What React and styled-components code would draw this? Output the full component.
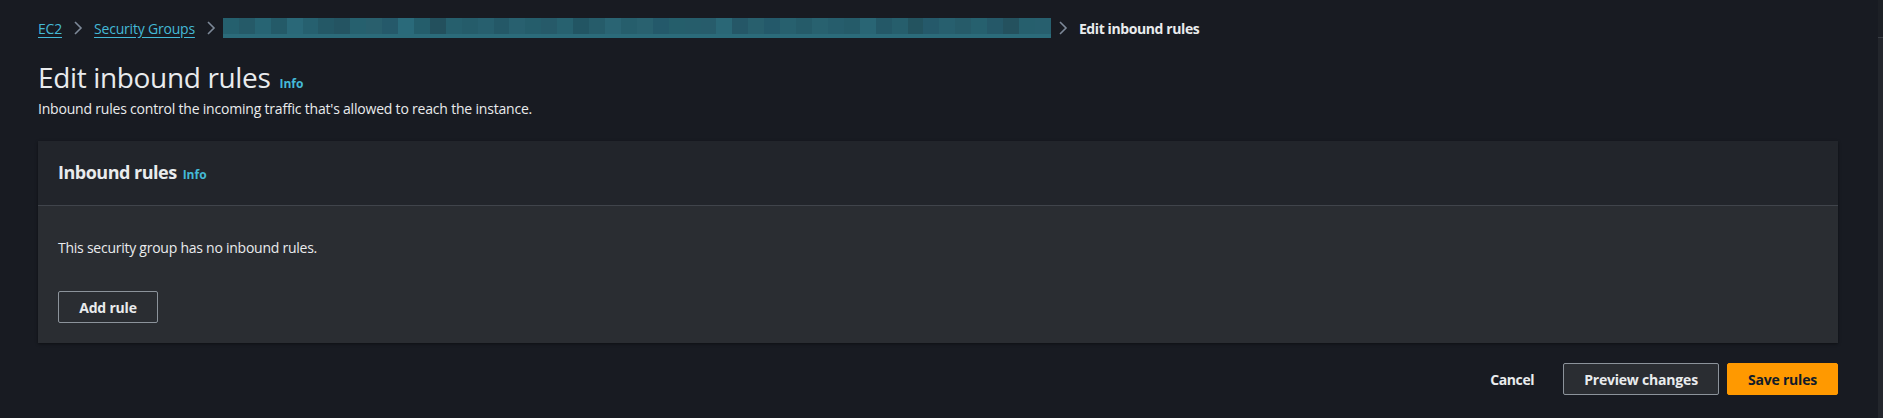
import React from 'react';
import styled, { createGlobalStyle } from 'styled-components';

const GlobalStyle = createGlobalStyle`
  html, body {
    margin: 0;
    padding: 0;
    background: #181b22;
  }
  body {
    font-family: "Open Sans", "Noto Sans", Arial, sans-serif;
    color: #e9ebed;
    -webkit-font-smoothing: antialiased;
  }
`;

const Shell = styled.div`
  display: flex;
  width: 1883px;
  min-height: 418px;
  background: #181b22;
`;

const Main = styled.main`
  flex: 1;
  padding: 0 40px 0 38px;
`;

const ScrollStrip = styled.div`
  width: 5px;
  background: #23262c;
  border-top: 37px solid #1d2026;
  box-shadow: inset 0 1px 0 #3a3e45;
`;

const Breadcrumbs = styled.nav`
  display: flex;
  align-items: center;
  height: 20px;
  margin-top: 18px;
  font-size: 14px;
  letter-spacing: -0.2px;
`;

const Crumb = styled.a`
  color: #44b9d6;
  text-decoration: underline;
  text-underline-offset: 3px;
  cursor: pointer;
`;

const CurrentCrumb = styled.span`
  color: #e9ebed;
  font-weight: 700;
  letter-spacing: -0.4px;
`;

const Chevron = styled.svg`
  width: 16px;
  height: 16px;
  margin: 0 8px;
  flex: none;
`;

/* blurred-out link text: the blur spills a few px past the text box */
const Redacted = styled.div`
  display: flex;
  flex-direction: column;
  width: 828px;
  height: 20px;
  margin: 0 -4px;
`;

const RedactedBlocks = styled.div`
  display: flex;
  flex: 1;
`;

const RedactedBlock = styled.div`
  flex: 1;
  background: ${p => p.$color};
`;

const RedactedLine = styled.div`
  height: 4px;
  background: #2b6b7a;
`;

const TitleRow = styled.div`
  display: flex;
  align-items: baseline;
  margin-top: 21px;
`;

const Title = styled.h1`
  margin: 0;
  font-size: 28px;
  line-height: 36px;
  font-weight: 400;
  letter-spacing: -0.35px;
  color: #e9ebed;
`;

const InfoLink = styled.a`
  margin-left: ${p => p.$gap || 6}px;
  font-size: 12px;
  font-weight: 700;
  color: #44b9d6;
  cursor: pointer;
`;

const Description = styled.p`
  margin: 4px 0 0;
  font-size: 14px;
  line-height: 20px;
  letter-spacing: -0.2px;
  color: #e9ebed;
`;

const Card = styled.section`
  margin-top: 22px;
  background: #2a2d32;
  box-shadow: 0 1px 3px rgba(0, 0, 0, 0.45);
`;

const CardHeader = styled.header`
  display: flex;
  align-items: baseline;
  height: 65px;
  box-sizing: border-box;
  padding: 20px 20px 0;
  background: #22252b;
  border-bottom: 1px solid #40444b;
`;

const CardTitle = styled.h2`
  margin: 0;
  font-size: 18px;
  line-height: 22px;
  font-weight: 700;
  letter-spacing: -0.5px;
  color: #e9ebed;
`;

const CardBody = styled.div`
  display: flex;
  flex-direction: column;
  align-items: flex-start;
  padding: 32px 20px 20px;
`;

const EmptyText = styled.p`
  margin: 0;
  font-size: 14px;
  line-height: 20px;
  letter-spacing: -0.25px;
  color: #e9ebed;
`;

const Button = styled.button`
  display: inline-flex;
  align-items: center;
  justify-content: center;
  height: 32px;
  min-width: ${p => p.$width || 0}px;
  box-sizing: border-box;
  padding: 0 20px;
  font-family: inherit;
  font-size: 14px;
  font-weight: 700;
  letter-spacing: -0.2px;
  border-radius: 2px;
  cursor: pointer;
  color: ${p => (p.$variant === 'primary' ? '#0f1b2a' : '#e9ebed')};
  background: ${p =>
    p.$variant === 'primary' ? '#ff9900' : p.$variant === 'link' ? 'transparent' : '#2a2d32'};
  border: 1px solid
    ${p => (p.$variant === 'primary' ? '#ff9900' : p.$variant === 'link' ? 'transparent' : '#8c939b')};
`;

const AddRuleButton = styled(Button)`
  margin-top: 33px;
`;

const Footer = styled.div`
  display: flex;
  justify-content: flex-end;
  align-items: center;
  gap: 8px;
  margin-top: 20px;
`;

const CancelButton = styled(Button)`
  letter-spacing: -0.4px;
`;

const blockColors = [
  '#25606e', '#255a68', '#276473', '#245a68', '#2a6878', '#26606f', '#245866', '#245462',
  '#26606e', '#295f6d', '#25596a', '#2a6a7a', '#245d6b', '#23505d', '#265f6d', '#255c6a',
  '#275f6e', '#245867', '#28606f', '#255d6b', '#265a69', '#27616f', '#225563', '#265c6a',
  '#2a6473', '#265e6c', '#29616f', '#24596a', '#255e6b', '#265d6b', '#275c6b', '#2a6776',
  '#255767', '#285f6d', '#24596a', '#27606e', '#255b69', '#28616f', '#265d6c', '#255b69',
  '#296574', '#245867', '#265e6c', '#23535f', '#25596a', '#275f6e', '#265b69', '#26606e',
  '#255868', '#24515e', '#265f6d', '#275f6e'
];

const ChevronIcon = () => (
  <Chevron viewBox="0 0 16 16" fill="none">
    <path d="M5 2l6 6-6 6" stroke="#7d8998" strokeWidth="1.6" />
  </Chevron>
);

const App = () => {
  return (
    <>
      <GlobalStyle />
      <Shell>
        <Main>
          <Breadcrumbs>
            <Crumb>EC2</Crumb>
            <ChevronIcon />
            <Crumb>Security Groups</Crumb>
            <ChevronIcon />
            <Redacted>
              <RedactedBlocks>
                {blockColors.map((c, i) => (
                  <RedactedBlock key={i} $color={c} />
                ))}
              </RedactedBlocks>
              <RedactedLine />
            </Redacted>
            <ChevronIcon />
            <CurrentCrumb>Edit inbound rules</CurrentCrumb>
          </Breadcrumbs>

          <TitleRow>
            <Title>Edit inbound rules</Title>
            <InfoLink $gap={9}>Info</InfoLink>
          </TitleRow>
          <Description>
            Inbound rules control the incoming traffic that's allowed to reach the instance.
          </Description>

          <Card>
            <CardHeader>
              <CardTitle>Inbound rules</CardTitle>
              <InfoLink>Info</InfoLink>
            </CardHeader>
            <CardBody>
              <EmptyText>This security group has no inbound rules.</EmptyText>
              <AddRuleButton $width={100}>Add rule</AddRuleButton>
            </CardBody>
          </Card>

          <Footer>
            <CancelButton $variant="link">Cancel</CancelButton>
            <Button>Preview changes</Button>
            <Button $variant="primary" $width={111}>Save rules</Button>
          </Footer>
        </Main>
        <ScrollStrip />
      </Shell>
    </>
  );
};

export default App;
